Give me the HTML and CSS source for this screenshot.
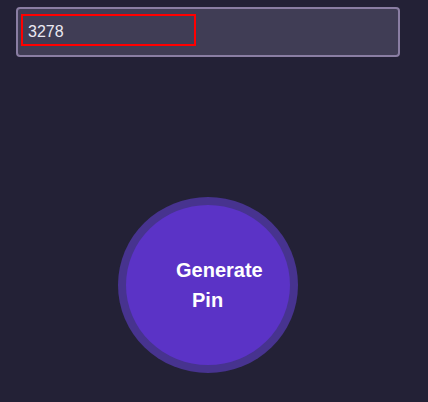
FILE: index.html
```html
<!DOCTYPE html>
<html>
<head>
<meta charset="utf-8">
<link rel="stylesheet" href="styles.css">
</head>
<body>
<div class="page">
  <div class="field">
    <div class="pin-box">3278</div>
  </div>
  <div class="circle-row">
    <button class="gen-btn">
      <span class="line line-1">Generate</span>
      <span class="line line-2">Pin</span>
    </button>
  </div>
</div>
</body>
</html>
```
FILE: styles.css
```css
html, body {
  margin: 0;
  padding: 0;
  background: #232136;
  width: 428px;
  height: 402px;
  overflow: hidden;
  font-family: "Liberation Sans", Arial, sans-serif;
}
.page {
  padding: 7px 0 0 16px;
}
.field {
  box-sizing: border-box;
  width: 384px;
  height: 50px;
  border: 2px solid #8a7ea3;
  border-radius: 4px;
  background: #403d55;
  padding: 5px 0 0 3px;
}
.pin-box {
  box-sizing: border-box;
  width: 175px;
  height: 32px;
  border: 2px solid #ff0000;
  padding: 1px 0 0 5px;
  font-size: 16px;
  line-height: 29px;
  color: #ebe9f2;
}
.circle-row {
  padding: 148px 0 0 110px;
}
.gen-btn {
  box-sizing: border-box;
  width: 164px;
  height: 160px;
  border: none;
  border-radius: 50%;
  background: #5b33c6;
  box-shadow: 0 0 0 8px #47338f;
  display: flex;
  flex-direction: column;
  align-items: flex-start;
  justify-content: center;
  padding: 0 0 0 50px;
  color: #ffffff;
  font-family: "Liberation Sans", Arial, sans-serif;
  font-weight: bold;
  font-size: 20px;
  line-height: 30px;
}
.line-2 {
  margin-left: 16px;
}
```
